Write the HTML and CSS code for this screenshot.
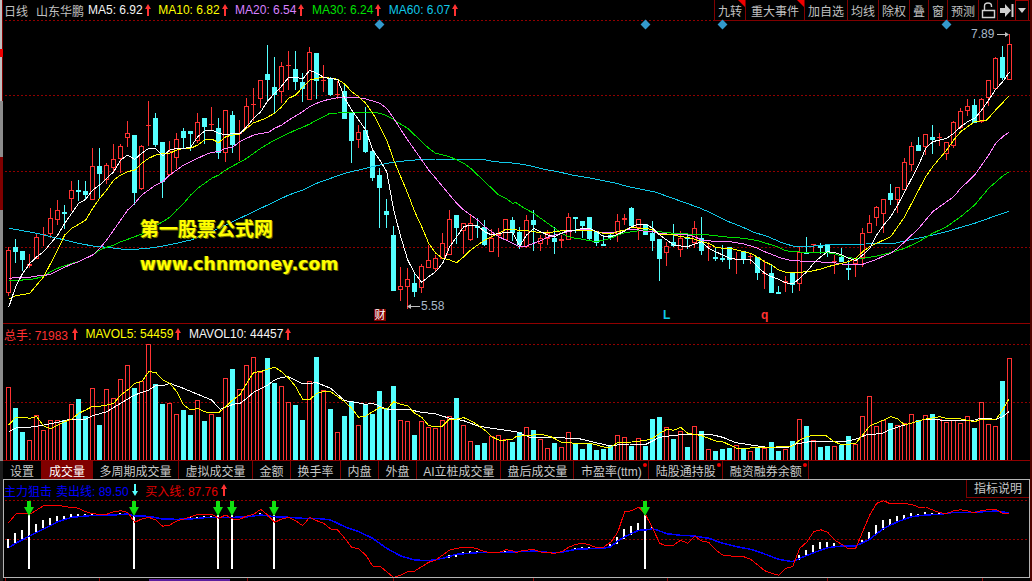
FILE: index.html
```html
<!DOCTYPE html>
<html lang="zh-CN">
<head>
<meta charset="utf-8">
<title>山东华鹏 日线</title>
<link rel="stylesheet" href="styles.css">
</head>
<body>
<svg class="defs" aria-hidden="true">
  <symbol id="arrow-up" viewBox="0 0 6 12"><path d="M3 0 6 5H4V12H2V5H0Z"/></symbol>
  <symbol id="arrow-down" viewBox="0 0 6 12"><path d="M2 0H4V7H6L3 12 0 7H2Z"/></symbol>
</svg>
<div class="app">
  <div class="rail">
    <i class="r1"></i><i class="r2"></i><i class="r3"></i><i class="r4"></i><i class="r5"></i><i class="r6"></i><i class="r7"></i>
  </div>
  <main class="terminal">
    <header class="bar">
      <div class="legend">
        <span class="period">日线</span>
        <span class="stock">山东华鹏</span>
        <span class="item c-white">MA5: 6.92<svg class="arr c-red"><use href="#arrow-up"/></svg></span>
        <span class="item c-yellow">MA10: 6.82<svg class="arr c-red"><use href="#arrow-up"/></svg></span>
        <span class="item c-pink">MA20: 6.54<svg class="arr c-red"><use href="#arrow-up"/></svg></span>
        <span class="item c-green">MA30: 6.24<svg class="arr c-red"><use href="#arrow-up"/></svg></span>
        <span class="item c-teal">MA60: 6.07<svg class="arr c-red"><use href="#arrow-up"/></svg></span>
      </div>
      <nav class="tools">
        <span class="tool flagged">九转</span>
        <span class="tool tool-wide flagged">重大事件</span>
        <span class="tool">加自选</span>
        <span class="tool">均线</span>
        <span class="tool">除权</span>
        <span class="tool">叠</span>
        <span class="tool">窗</span>
        <span class="tool">预测</span>
        <span class="tool tool-icon"><svg width="15" height="17" viewBox="0 0 15 17"><path d="M3.5 8V4Q3.5 1 7 1T10.500 4V5M1.500 8.500H13.500V15.500H1.500Z" fill="none" stroke="#d0d0d0" stroke-width="1.400"/></svg></span>
        <span class="tool tool-icon tool-next"><svg width="14" height="13" viewBox="0 0 14 13"><path d="M0 4H5V0L11 6.500 5 13V9H0ZM11.500 0H13.500V13H11.500Z" fill="#d0d0d0"/></svg></span>
        <span class="tool tool-drop"><svg width="8" height="5" viewBox="0 0 8 5"><path d="M0 0H8L4 5Z" fill="#d0d0d0"/></svg></span>
      </nav>
    </header>

    <section class="price">
      <svg id="price-chart" class="plot" width="1027" height="303" viewBox="3 20 1027 303"></svg>
      <div class="mark mark-1"></div>
      <div class="mark mark-2"></div>
      <div class="mark mark-3"></div>
      <div class="mark mark-4"></div>
      <div class="wm wm-cn">第一股票公式网</div>
      <div class="wm wm-en">www.chnmoney.com</div>
      <div class="tag tag-hi">7.89</div>
      <div class="tag tag-lo">5.58</div>
      <div class="note note-cai">财</div>
      <div class="note note-l">L</div>
      <div class="note note-q">q</div>
    </section>

    <section class="volume">
      <div class="legend vol-legend">
        <span class="item item-gap c-red">总手: 71983<svg class="arr c-red"><use href="#arrow-up"/></svg></span>
        <span class="item c-yellow">MAVOL5: 54459<svg class="arr c-red"><use href="#arrow-up"/></svg></span>
        <span class="item c-white">MAVOL10: 44457<svg class="arr c-red"><use href="#arrow-up"/></svg></span>
      </div>
      <svg id="volume-chart" class="plot" width="1027" height="116" viewBox="3 344 1027 116"></svg>
    </section>

    <nav class="tabs">
      <span class="tab tab-lead">设置</span>
      <span class="tab tab-lead active">成交量</span>
      <span class="tab">多周期成交量</span>
      <span class="tab">虚拟成交量</span>
      <span class="tab">金额</span>
      <span class="tab">换手率</span>
      <span class="tab">内盘</span>
      <span class="tab">外盘</span>
      <span class="tab tab-tight">AI立桩成交量</span>
      <span class="tab tab-tight">盘后成交量</span>
      <span class="tab dotted">市盈率(ttm)</span>
      <span class="tab dotted">陆股通持股</span>
      <span class="tab dotted">融资融券余额</span>
    </nav>

    <section class="signal">
      <div class="signal-head">
        <span class="sig-name">主力狙击</span>
        <span class="item c-blue">卖出线: 89.50<svg class="arr c-cyan"><use href="#arrow-down"/></svg></span>
        <span class="item c-pure-red">买入线: 87.76<svg class="arr c-red"><use href="#arrow-up"/></svg></span>
        <span class="explain">指标说明</span>
      </div>
      <svg id="signal-chart" class="plot" width="1025" height="77" viewBox="4 500 1025 77"></svg>
    </section>
    <svg id="axis-strip" class="plot" width="1027" height="3" viewBox="3 578 1027 3"></svg>
  </main>
  <div class="edge"></div>
</div>
<script src="chart.js"></script>
</body>
</html>
```
FILE: styles.css
```css
* { box-sizing: border-box; }
html, body { margin: 0; height: 100%; background: #000; overflow: hidden; }
body { font: 12px "Liberation Sans", "Noto Sans CJK SC", sans-serif; color: #c0c0c0; }
.defs { position: absolute; width: 0; height: 0; }
.app { display: flex; width: 1032px; height: 581px; }

.rail { width: 3px; display: flex; flex-direction: column; flex: none; }
.rail i { display: block; }
.r1 { height: 49px; background: #c0c0c0; border-right: 1px solid #800000; }
.r2 { height: 8px; background: #f00000; }
.r3 { height: 44px; background: #c0c0c0; border-right: 1px solid #800000; }
.r4 { height: 56px; background: #8c8c8c; }
.r5 { height: 53px; background: #800000; }
.r6 { height: 251px; background: #8c8c8c; }
.r7 { flex: 1; background: #1c1c1c; }

.terminal { flex: 1; display: flex; flex-direction: column; min-width: 0; }
.edge { width: 2px; flex: none; background: #500000; }

.bar { height: 20px; display: flex; align-items: center; justify-content: space-between; }
.legend { display: flex; align-items: center; height: 20px; padding-left: 1px; }
.period { width: 32px; }
.stock { width: 52px; }
.item { display: inline-flex; align-items: center; white-space: nowrap; margin-right: 7.5px; }
.arr { width: 6px; height: 12px; margin-left: 2px; fill: currentColor; flex: none; }
.item-gap .arr { margin-left: 4px; }

.c-white { color: #f4f4f4; }
.c-yellow { color: #ffff00; }
.c-pink { color: #d880ff; }
.c-green { color: #00e000; }
.c-teal { color: #10c8e8; }
.c-red { color: #ff3232; }
.c-cyan { color: #54ffff; }
.c-blue { color: #0000ff; }
.c-pure-red { color: #e00000; }

.tools { display: flex; height: 20px; margin-right: 1px; }
.tool { position: relative; display: flex; align-items: center; justify-content: center; padding: 0 3px; border-left: 1px solid #800000; white-space: nowrap; }
.tool-wide { padding: 0 5px; }
.tool-icon { width: 19px; padding: 0; }
.tool-next { width: 18px; }
.tool-drop { width: 14px; padding: 0; border: 1px solid #a00000; border-bottom: 0; }
.flagged::after { content: ""; position: absolute; top: 0; right: 0; border-top: 7px solid #f00000; border-left: 7px solid transparent; }

.price { position: relative; height: 304px; border-bottom: 1px solid #900000; }
.plot { display: block; flex: none; }

.mark { position: absolute; top: 0; width: 7px; height: 7px; margin-top: 1px; background: #3399cc; transform: rotate(45deg); }
.mark-1 { left: 373px; }
.mark-2 { left: 639px; }
.mark-3 { left: 716px; }
.mark-4 { left: 940px; }

.wm { position: absolute; color: #ffff00; font-weight: bold; white-space: nowrap; text-shadow: 1px 1px 0 #6a6a00, -1px 0 0 #555500; }
.wm-cn { left: 137px; top: 198px; font-size: 19px; line-height: 24px; }
.wm-en { left: 137px; top: 233px; font: bold 17.300px/22px "DejaVu Sans", sans-serif; }

.tag { position: absolute; color: #a8b8c8; line-height: 14px; }
.tag-hi { left: 968px; top: 7px; }
.tag-lo { left: 418px; top: 279px; }

.note { position: absolute; font-weight: bold; line-height: 14px; }
.note-cai { left: 371px; top: 289px; width: 12px; height: 12px; font-size: 11px; line-height: 12px; font-weight: normal; text-align: center; color: #fff; background: #800000; }
.note-l { left: 660px; top: 288px; color: #10c8e8; }
.note-q { left: 758px; top: 288px; color: #ff3232; }

.volume { height: 137px; border-bottom: 1px solid #900000; }

.tabs { height: 18px; display: flex; }
.tab { position: relative; display: flex; align-items: center; padding: 0 6.5px; border-right: 1px solid #800000; white-space: nowrap; color: #c8c8c8; }
.tab-lead { padding: 0 7px; }
.tab-tight { padding: 0 6px; }
.tab.active { background: #800000; color: #fff; }
.dotted::after { content: ""; position: absolute; top: 2px; right: 1px; width: 4px; height: 4px; border-radius: 50%; background: #f00000; }

.signal { height: 99px; border: 1px solid #b4b4b4; flex: none; }
.signal-head { height: 20px; display: flex; align-items: center; }
.sig-name { color: #0000ff; margin-right: 4px; }
.signal-head .arr { margin-left: 3px; }
.explain { margin-left: auto; padding: 0 7px; height: 18px; line-height: 18px; border-left: 1px solid #800000; border-bottom: 1px solid #800000; color: #c8c8c8; align-self: flex-start; }
```
FILE: chart.js
```js
var NS = "http://www.w3.org/2000/svg";
var RED = "#ff3232", CYAN = "#54ffff";

function el(svg, name, attrs) {
  var n = document.createElementNS(NS, name);
  for (var k in attrs) n.setAttribute(k, attrs[k]);
  svg.appendChild(n);
  return n;
}
function rect(svg, x, y, w, h, fill) {
  el(svg, "rect", { x: x, y: y, width: w, height: h, fill: fill, "shape-rendering": "crispEdges" });
}
/* Points are traced in 3x crop coordinates: real = origin + value / 3 */
function tr(ox, oy, s) {
  return s.trim().split(/\s+/).map(function (p) {
    var a = p.split(",");
    return [ox + a[0] / 3, oy + a[1] / 3];
  });
}
function line(svg, pts, color, width) {
  el(svg, "polyline", {
    points: pts.map(function (p) { return p[0].toFixed(1) + "," + p[1].toFixed(1); }).join(" "),
    fill: "none", stroke: color, "stroke-width": width || 1,
    "shape-rendering": "crispEdges", "stroke-linejoin": "round"
  });
}
function dots(svg, y, x0, x1) {
  el(svg, "line", {
    x1: x0, x2: x1, y1: y + 0.5, y2: y + 0.5, stroke: "#900000",
    "stroke-dasharray": "2 2", "shape-rendering": "crispEdges"
  });
}
function cx(i) { return 6 + 7 * i; } /* left edge of the 5px body */

/* ---------- candles: top, bottom, high, low ---------- */
var CANDLES = [
"r250,292,247,295","c247,251,239,262","c251,259,251,270","r264,266,254,267","r237,258,233,258","r234,235,227,245",
"r218,233,208,237","r210,219,200,224","c212,213,205,228","r190,198,181,210","c190,191,180,200","c191,194,181,198",
"r166,199,148,199","c166,173,148,198","r165,179,163,183","r159,167,144,172","r146,158,144,172","r133,137,121,146",
"c135,192,135,204","r146,188,145,189","r125,126,101,145","c118,144,113,146","c142,181,142,197","r151,174,141,175",
"r139,157,133,168","c131,137,128,147","c131,133,131,150","r122,140,113,142","c118,126,118,143","r124,125,107,130",
"c128,152,118,158","r110,152,110,161","c115,144,111,152","r133,134,120,160","r106,127,98,127","r104,105,88,120",
"r80,98,80,107","c74,79,45,100","c87,94,57,113","r66,91,62,102","r65,66,51,89","c69,81,51,89","c82,88,73,101",
"r52,99,47,99","c53,80,53,98","r80,81,65,91","c78,94,77,95","r94,95,81,98","c91,118,85,118","c112,140,112,162",
"r132,139,125,147","c130,151,107,152","c151,177,151,180","c175,187,168,227","c211,214,199,227","c235,290,226,290",
"r286,289,267,300","r279,286,268,308","c283,291,273,296","r266,287,264,292","r260,267,245,267","r258,268,255,270",
"r243,258,233,258","r219,254,210,254","c215,227,215,243","r223,230,223,253","r223,239,215,240","c226,227,218,237",
"c227,244,220,245","r238,251,229,251","r234,236,228,256","r219,239,219,239","c220,232,217,240",
"c232,244,227,248","r220,246,215,247","c220,224,210,250","r238,243,235,250","r233,238,230,244","c238,241,227,253",
"r239,241,235,247","r217,239,213,239","c217,218,217,232","c221,225,221,237","c217,238,217,239","c232,242,232,245",
"c244,245,235,245","c235,237,233,239","r221,233,214,241","r218,220,214,224","c208,225,207,226","r219,227,219,239",
"c224,234,224,234","c233,240,221,250","c239,258,239,280","r246,252,242,265","c242,245,224,246","r238,249,231,256",
"c237,238,233,248","r228,242,221,247","c238,250,217,254","r246,247,242,260","c257,258,248,260","c258,259,245,261",
"c247,259,247,268","r259,260,252,273","c251,259,251,263","r256,257,253,263","c257,272,257,279","r273,274,260,288",
"c273,292,265,292","c292,293,286,293","r281,283,276,291","c273,284,273,292","r252,283,247,290","c252,253,237,253",
"r244,245,244,252","c245,247,243,253","c245,252,245,256","r261,262,255,273","c257,261,248,261","c268,269,260,279",
"r260,263,258,276","r233,257,228,266","r223,232,215,232","r207,217,206,225","r199,213,199,232","c193,199,184,204",
"r187,199,187,212","r162,189,158,189","r146,164,142,170","c145,150,137,150","r134,146,134,154","c137,139,125,153",
"r137,138,133,145","r142,153,142,159","r122,145,121,147","r111,127,108,128","r106,110,99,115","c105,122,99,122",
"r99,121,98,122","r80,97,80,105","r58,88,57,88","c57,77,46,79","r44,79,34,79"
];

var VOLUME = (
"r202 c264 c336 r361 r286 r331 r301 r301 c300 r253 c237 c288 r205 c315 r208 r235 r178 r136 c204 r185 r73 c192 c252 r250 r283 c270 c285 r241 c303 r283 c291 r175 c147 r208 r136 r112 r157 c114 c189 r199 r247 c255 c300 r184 c111 r212 c267 r337 c288 c244 r316 c254 c282 c213 c265 c198 r301 r304 c345 r304 r322 r325 r301 r289 c234 r316 r364 c375 c369 r350 r346 r358 c366 " +
"c336 r322 c330 r358 r385 c369 r382 r337 c369 c387 c369 c390 c387 c375 r346 r352 c378 r355 c378 c297 c291 r322 c357 r334 c381 r319 c333 r388 c393 c387 c384 r376 c387 r394 c381 r385 c366 c393 r388 c363 r298 c318 r361 c381 c378 r379 c376 c348 r372 r289 r229 r319 r300 c309 r316 r310 r283 c301 r286 c282 r298 r307 r301 r310 r289 c324 r247 r313 r319 c183 r115"
).split(" ");

/* ---------- moving averages of the price pane ---------- */
var MA5 = [].concat(
  tr(0,120,"26,562 47,500 68,460 90,430 110,410 131,395 152,370 173,345 194,310 215,280 236,250 257,238 278,210 299,195 320,175 341,155 362,120 383,105 404,118 425,100 446,85 467,87 488,108 509,90 530,85 551,85 572,82 593,50 614,33 635,30 656,40 677,45 698,40 719,42 740,20"),
  tr(0,0,"761,355 782,335 803,303 824,280 845,258 866,232 887,232 908,237 929,211 950,220 971,232 992,236 1013,238 1034,295 1055,330 1076,360"),
  tr(0,120,"1097,30 1118,90 1139,120 1160,155 1181,270 1202,350 1223,420 1244,460 1265,487 1286,470 1307,455 1328,430 1349,380 1370,350 1391,320 1412,315 1433,318 1454,335 1475,345 1496,340 1517,338 1538,337"),
  tr(516,120,"11,378 32,345 53,325 74,335 95,345 116,350 137,340 158,330 179,330 200,325 221,325 242,335 263,350 284,350 305,343 326,333 347,320 368,312 389,312 410,325 431,345 452,360 473,375 494,378 515,380 536,372 557,365 578,385 599,395 620,405 641,415 662,418 683,418 704,420 725,440 746,460 767,470 788,478 809,488 830,492 851,475 872,455 893,430 914,410 935,395 956,398 977,405 998,415 1019,422 1040,405 1061,385 1082,345 1103,315 1124,290 1145,255 1166,215 1187,175 1208,135 1229,85 1250,65 1271,60 1292,55 1313,40 1334,20 1355,5"),
  tr(516,0,"1376,355 1397,330 1418,300 1439,268 1460,245 1481,215")
);
var MA10 = [].concat(
  tr(0,120,"26,538 47,527 89,520 110,495 131,470 152,430 173,390 194,345 215,325 236,313 257,300 278,265 299,235 320,210 341,180 362,165 383,155 404,150 425,130 446,115 467,105 488,100 509,100 530,90 551,85 572,85 593,75 614,60 635,57 656,68 677,50 698,45 719,42 740,25 761,8"),
  tr(0,0,"790,358 824,340 845,320 866,295 887,285 908,262 929,240 950,235 971,232 1013,238 1034,252 1055,275 1076,290 1097,310 1118,340 1130,360"),
  tr(0,120,"1139,20 1160,60 1181,120 1202,170 1223,220 1244,275 1265,320 1286,370 1307,400 1328,415 1349,420 1370,428 1391,410 1412,390 1433,375 1454,360 1475,350 1496,340 1517,328 1538,327"),
  tr(516,120,"11,332 32,332 53,335 74,338 95,338 116,335 137,332 158,332 179,332 200,330 221,330 242,335 263,340 284,342 305,335 326,330 347,322 368,325 389,325 410,330 431,342 452,343 473,345 494,350 515,352 536,358 557,365 578,370 599,382 620,385 641,385 662,390 683,395 704,400 725,412 746,425 767,435 788,450 809,457 830,458 851,457 872,455 893,452 914,447 935,440 956,435 977,430 998,425 1019,415 1040,395 1061,380 1082,370 1103,360 1124,350 1145,320 1166,290 1187,250 1208,210 1229,170 1250,140 1271,115 1292,90 1313,60 1334,35 1355,20 1376,5"),
  tr(516,0,"1412,360 1439,330 1460,308 1478,288")
);
var MA20 = [].concat(
  tr(0,120,"26,475 47,473 89,472 110,468 131,467 152,462 173,452 194,442 215,432 236,425 257,415 278,405 299,385 320,360 341,330 362,300 383,270 404,250 425,225 446,210 467,195 488,185 509,165 530,150 551,135 572,125 593,115 614,105 635,97 656,95 677,85 698,82 719,65 740,55 761,45 782,40 803,38 824,25 845,15"),
  tr(0,0,"870,358 900,340 929,320 950,310 971,302 992,297 1013,293 1034,293 1055,293 1076,293 1097,297 1118,303 1139,310 1160,325 1181,355"),
  tr(0,120,"1200,25 1223,60 1244,90 1265,120 1286,150 1307,175 1328,200 1349,225 1370,250 1391,270 1412,285 1433,300 1454,320 1475,335 1496,350 1517,360 1538,370"),
  tr(516,120,"11,380 32,378 53,370 74,362 95,352 116,345 137,340 158,335 179,330 200,327 221,330 242,335 263,338 284,338 305,335 326,330 347,327 368,330 389,335 410,335 431,340 452,342 473,343 494,343 515,345 536,350 557,360 578,362 599,365 620,365 641,365 662,368 683,372 704,378 725,385 746,395 767,403 788,412 809,418 830,422 851,423 872,423 893,424 914,426 935,428 956,428 977,432 998,433 1019,435 1040,433 1061,425 1082,418 1103,408 1124,400 1145,385 1166,365 1187,345 1208,325 1229,300 1250,275 1271,260 1292,245 1313,230 1334,205 1355,185 1376,165 1397,135 1418,105 1439,70 1460,50 1478,37")
);
var MA30 = [].concat(
  tr(0,120,"26,481 47,481 89,479 110,475 131,468 152,455 173,445 194,437 215,430 236,425 257,415 278,405 299,390 320,382 341,375 362,365 383,358 404,350 425,342 446,330 467,318 488,305 509,292 530,270 551,250 572,225 593,205 614,190 635,175 656,165 677,150 698,138 719,127 740,115 761,100 782,85 803,72 824,60 845,50 866,40 887,30 908,22 929,12"),
  tr(0,0,"955,358 990,340 1013,339 1034,337 1097,337 1118,337 1139,340 1160,347 1181,358"),
  tr(0,120,"1190,5 1223,25 1265,65 1286,85 1307,100 1349,110 1391,130 1412,145 1433,165 1454,185 1475,205 1496,225 1517,235 1538,250"),
  tr(516,120,"0,248 21,262 53,280 74,295 95,310 116,325 137,340 158,350 179,355 200,358 221,362 242,365 263,360 284,355 305,345 326,338 347,335 368,332 389,332 410,335 431,335 473,340 515,342 557,343 599,347 641,352 683,355 725,362 767,375 788,382 809,392 830,395 851,396 893,398 935,398 956,402 977,408 998,413 1019,415 1040,415 1061,412 1082,408 1124,398 1166,385 1208,365 1250,340 1292,320 1334,290 1376,255 1418,205 1460,168 1478,156")
);
var MA60 = [].concat(
  tr(0,120,"26,325 68,332 110,340 152,350 194,360 236,370 278,378 320,382 362,387 404,388 446,385 488,378 530,370 572,360 614,345 656,325 698,305 740,285 782,265 824,245 866,225 908,210 950,190 992,175 1034,160 1076,150 1118,140 1160,130 1202,124 1244,120 1307,117 1370,117 1445,118 1485,125 1548,130"),
  tr(516,120,"42,137 84,148 126,155 168,165 210,172 252,180 294,188 336,200 378,208 420,217 462,232 504,247 546,262 588,280 630,302 672,318 714,337 756,350 798,368 830,378 870,380 950,373 1050,372 1130,371 1170,362 1210,354 1250,345 1292,335 1334,322 1376,310 1418,295 1478,274")
);

/* ---------- volume averages ---------- */
var VMA5 = [].concat(
  tr(0,320,"26,315 47,292 68,292 89,295 110,290 131,318 152,326 173,315 194,305 215,297 236,280 257,270 278,259 299,259 320,255 341,250 362,225 383,210 404,190 425,185 446,155 467,157 488,180 509,190 530,215 551,255 572,270 593,265 614,275 635,279 656,278 677,260 698,240 719,225 740,190 761,157 782,155 803,147 824,142 845,155 866,175 887,200 908,238 929,239 950,220 971,215 992,215 1013,230 1034,245 1055,265 1076,292 1097,288 1118,275 1139,262 1160,268 1181,245 1202,253 1223,257 1244,280 1265,292 1286,317 1307,320 1328,318 1349,297 1370,297 1391,293 1412,302 1433,315 1454,330 1475,350 1496,360 1517,360 1538,358"),
  tr(516,320,"0,350 21,347 63,344 84,345 105,350 137,367 180,370 225,370 263,381 284,381 305,368 347,366 390,361 410,355 431,340 452,328 473,331 494,322 515,340 557,347 578,355 599,363 620,365 662,385 746,383 830,378 851,360 872,350 893,346 930,347 950,362 977,375 1019,370 1040,345 1061,318 1103,300 1124,290 1145,297 1166,315 1229,297 1271,290 1292,295 1334,297 1376,305 1397,297 1440,298 1460,270 1478,238")
);
var VMA10 = [].concat(
  tr(0,320,"26,335 47,324 89,322 131,315 173,307 215,297 257,298 278,287 320,275 362,250 404,225 446,210 467,197 488,198 509,190 550,205 593,223 635,240 660,268 700,253 720,250 740,235 761,217 803,195 824,180 845,172 866,170 908,192 950,188 992,205 1034,242 1055,245 1097,253 1118,250 1160,268 1222,268 1265,277 1307,282 1349,295 1391,302 1433,318 1496,328 1548,335"),
  tr(516,320,"42,352 105,352 190,356 230,366 280,377 340,372 390,373 431,352 473,346 530,342 580,342 620,352 660,368 725,378 760,383 810,384 840,372 880,365 990,364 1019,358 1050,345 1100,340 1124,328 1166,315 1229,297 1300,302 1376,300 1395,295 1440,298 1460,290 1478,275")
);

/* ---------- signal pane ---------- */
var SIG_RED = [].concat(
  tr(0,455,"26,203 47,177 68,175 89,178 110,165 131,152 152,150 173,150 194,155 215,157 236,160 257,170 278,176 299,178 320,178 341,170 362,167 383,172 404,202 425,192 446,187 467,195 488,214 509,210 530,198 551,192 572,185 593,178 614,178 635,178 656,190 677,180 698,192 719,193 740,183 761,178 782,163 803,180 824,202 845,192 866,187 887,197 908,212 929,187 950,197 971,205 992,222 1013,225 1034,250 1055,277 1076,282 1097,300 1118,333 1139,333 1160,350 1181,368 1202,360 1223,350 1244,348 1265,335 1286,322 1307,315 1328,300 1349,285 1370,280 1391,277 1412,277 1433,282 1454,290 1475,293 1496,293 1517,284 1538,287"),
  tr(516,455,"0,293 21,286 53,284 74,291 116,295 137,290 158,277 179,268 200,265 221,270 242,278 263,276 284,262 305,232 326,170 347,167 368,156 389,180 410,220 431,265 452,273 473,270 494,256 515,265 536,243 557,258 578,262 599,285 620,300 662,305 683,305 704,313 746,347 767,355 788,361 809,340 830,335 851,280 872,262 893,230 914,224 935,232 956,255 977,268 998,282 1019,280 1040,230 1061,180 1082,145 1103,137 1124,147 1145,145 1187,148 1208,157 1229,156 1250,165 1271,173 1292,176 1313,167 1334,164 1355,168 1376,174 1397,166 1439,163 1460,175 1478,175")
);
var SIG_BLUE = [].concat(
  tr(0,455,"26,278 47,265 89,243 131,222 173,200 215,187 257,183 299,180 341,180 383,177 404,183 446,184 488,192 530,193 572,192 614,188 656,187 698,187 740,186 782,180 824,185 866,187 908,190 950,190 992,195 1034,215 1076,230 1118,250 1160,280 1202,303 1244,315 1286,317 1328,310 1370,298 1433,293 1496,293 1548,290"),
  tr(516,455,"21,290 53,288 95,292 137,292 179,283 221,281 263,280 284,275 305,258 326,245 368,226 389,225 410,221 431,228 452,236 494,241 536,243 578,250 620,265 662,275 704,283 746,297 788,313 830,320 851,310 893,293 935,278 977,273 1019,273 1061,253 1103,220 1145,200 1187,185 1229,180 1271,178 1313,172 1376,172 1439,168 1478,173")
);
var SHORT_L = "24,253,278 45,235,263 66,225,252 108,207,230 129,195,218 150,190,210 171,183,200 192,183,195 213,177,187 234,177,185 255,177,183 276,177,180 339,176,179 360,174,178 570,187,190 591,185,188 612,183,186 633,183,186 738,183,186 780,175,180 1325,308,313 1346,300,310 1367,296,305 1388,291,300 1409,288,297 1430,288,293 1514,287,290";
var SHORT_R = "30,287,290 155,285,288 176,278,285 197,276,283 218,276,280 282,267,276 303,246,267 324,222,252 345,213,240 366,204,228 408,216,220 534,240,243 849,300,314 870,285,304 891,270,291 912,261,283 933,261,276 954,264,273 1038,255,268 1059,231,255 1080,210,240 1101,195,225 1122,192,212 1143,183,205 1164,180,195 1185,174,188 1206,177,183 1227,171,180 1248,174,177 1269,174,177 1311,171,174 1332,171,174 1416,168,171 1437,165,168";
var ALERTS = [3, 18, 30, 32, 38, 91];

/* ---------- draw ---------- */
function drawPrice() {
  var s = document.getElementById("price-chart");
  [20, 95, 171, 247].forEach(function (y) { dots(s, y, 5, 1030); });
  rect(s, 714, 20, 315, 1, "#800000");
  rect(s, 1009, 34, 1, 10, RED);

  CANDLES.forEach(function (c, i) {
    var up = c[0] === "r", v = c.slice(1).split(",").map(Number);
    var color = up ? RED : CYAN, x = cx(i), top = v[0], bot = v[1];
    rect(s, x + 2, v[2], 1, v[3] - v[2] + 1, color);
    if (up && bot - top > 2) {
      rect(s, x, top, 5, bot - top + 1, color);
      rect(s, x + 1, top + 1, 3, bot - top - 1, "#000");
    } else {
      rect(s, x, top, 5, Math.max(bot - top, 1) + (up ? 0 : 1), color);
    }
  });

  line(s, MA60, "#10c8e8");
  line(s, MA30, "#00e000");
  line(s, MA20, "#ff80ff");
  line(s, MA10, "#ffff00");
  line(s, MA5, "#ffffff");

  /* extreme-value leaders */
  rect(s, 997, 34, 11, 1, "#c0c0c0");
  el(s, "path", { d: "M1009 34.500 1005 32V37Z", fill: "#c0c0c0" });
  rect(s, 409, 306, 11, 1, "#c0c0c0");
  el(s, "path", { d: "M407 306.500 411 304V309Z", fill: "#c0c0c0" });
}

function drawVolume() {
  var s = document.getElementById("volume-chart");
  [344, 402].forEach(function (y) { dots(s, y, 5, 1030); });
  VOLUME.forEach(function (v, i) {
    var x = cx(i), top = 320 + v.slice(1) / 3 | 0, bottom = 460;
    if (v[0] === "r") {
      rect(s, x, top, 5, bottom - top, RED);
      rect(s, x + 1, top + 1, 3, bottom - top - 1, "#000");
    } else {
      rect(s, x, top, 5, bottom - top, CYAN);
    }
  });
  line(s, VMA10, "#ffffff");
  line(s, VMA5, "#ffff00");
}

function drawSignal() {
  var s = document.getElementById("signal-chart");
  [500, 539].forEach(function (y) { dots(s, y, 5, 1029); });
  function shorts(ox, list) {
    list.split(" ").forEach(function (t) {
      var a = t.split(",").map(Number);
      var y0 = Math.round(455 + a[1] / 3), y1 = Math.round(455 + a[2] / 3);
      rect(s, Math.round(ox + a[0] / 3) - 1, y0, 2, Math.max(y1 - y0, 1), "#ffffff");
    });
  }
  shorts(0, SHORT_L);
  shorts(516, SHORT_R);
  ALERTS.forEach(function (i) { rect(s, 7 + 7 * i, 515, 2, 54, "#ffffff"); });
  line(s, SIG_BLUE, "#0000ff", 1.5);
  line(s, SIG_RED, "#ff0000");
  ALERTS.forEach(function (i) {
    var c = 8 + 7 * i;
    el(s, "path", { d: "M" + (c - 2) + " 501H" + (c + 2) + "V507H" + (c + 5) + "L" + c + " 516 " + (c - 5) + " 507H" + (c - 2) + "Z", fill: "#10e010" });
  });
}

function drawStrip() {
  var s = document.getElementById("axis-strip");
  [5, 99, 247, 393, 533, 667, 827, 982].forEach(function (x) { rect(s, x, 578, 1, 3, "#900000"); });
  rect(s, 149, 579, 81, 2, "#5a1e9e");
}

drawPrice();
drawVolume();
drawSignal();
drawStrip();
```
